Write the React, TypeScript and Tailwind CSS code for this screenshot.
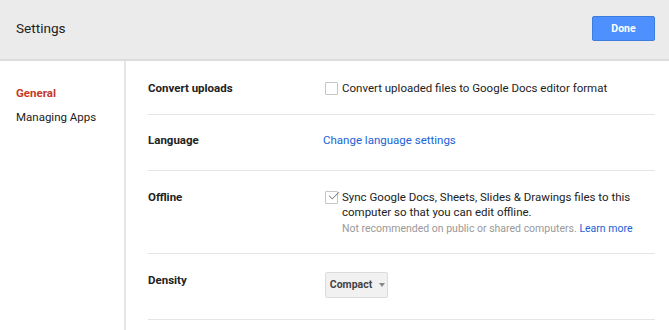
import { Check } from 'lucide-react';

const rows = [
  { label: 'Convert uploads', kind: 'convert' },
  { label: 'Language', kind: 'language' },
  { label: 'Offline', kind: 'offline' },
  { label: 'Density', kind: 'density' },
];

function Box({ checked }: { checked?: boolean }) {
  return (
    <span className="relative mt-[1px] flex h-[13px] w-[13px] shrink-0 items-center justify-center rounded-[1px] border border-[#c6c6c6] bg-white">
      {checked && (
        <Check className="absolute left-[1px] top-[-3px] h-[14px] w-[14px] text-[#555]" strokeWidth={1.5} />
      )}
    </span>
  );
}

export default function App() {
  return (
    <div className="h-[330px] w-[669px] overflow-hidden bg-white font-['Roboto','Liberation_Sans',sans-serif] text-[#222]">
      {/* Header */}
      <div className="flex h-[61px] items-center justify-between border-b-2 border-[#dcdcdc] bg-[#ebebeb] pl-4 pr-[14px]">
        <h1 className="mb-[2px] text-[13.6px] text-[#222]">Settings</h1>
        <button className="mb-[2px] h-[25px] w-[63px] rounded-[2px] border border-[#3c7de0] bg-[#4d90fe] text-[10.5px] font-bold text-white">
          Done
        </button>
      </div>

      <div className="flex h-[269px]">
        {/* Sidebar */}
        <div className="w-[126px] shrink-0 border-r-2 border-[#e6e6e6] pl-4 pt-[25px]">
          <div className="text-[11.5px] font-bold leading-[15px] text-[#c53929]">General</div>
          <div className="mt-[9px] text-[11.5px] leading-[15px] text-[#222]">Managing Apps</div>
        </div>

        {/* Content */}
        <div className="flex-1 pl-[22px] pr-[14px]">
          {rows.map((row) => (
            <div
              key={row.kind}
              className={`flex border-b border-[#e5e5e5] ${
                row.kind === 'convert'
                  ? 'h-[54px] items-center pt-[2px]'
                  : row.kind === 'language'
                    ? 'h-[56px] items-center pb-[4px]'
                    : row.kind === 'offline'
                      ? 'h-[83px] pt-[19px]'
                      : 'h-[66px] pt-[18px]'
              }`}
            >
              <div
                className={`w-[175px] shrink-0 text-[11.5px] font-bold leading-[15px] ${
                  row.kind === 'density' ? 'pt-[1px]' : ''
                }`}
              >
                {row.label}
              </div>
              {row.kind === 'convert' && (
                <div className="flex items-start gap-[4px] pl-[2px] text-[11.5px] leading-[15px]">
                  <Box />
                  <span>Convert uploaded files to Google Docs editor format</span>
                </div>
              )}
              {row.kind === 'language' && (
                <a className="text-[11.5px] leading-[15px] text-[#1a62d6]">Change language settings</a>
              )}
              {row.kind === 'offline' && (
                <div className="flex items-start gap-[4px] pl-[2px]">
                  <Box checked />
                  <div>
                    <div className="text-[11.5px] leading-[15px]">
                      Sync Google Docs, Sheets, Slides &amp; Drawings files to this
                      <br />
                      computer so that you can edit offline.
                    </div>
                    <div className="mt-[1px] text-[10.5px] leading-[15px] text-[#999]">
                      Not recommended on public or shared computers.{' '}
                      <a className="text-[#1a62d6]">Learn more</a>
                    </div>
                  </div>
                </div>
              )}
              {row.kind === 'density' && (
                <div className="ml-[2px] flex h-[26px] w-[63px] items-center justify-center gap-[7px] rounded-[2px] border border-[#dcdcdc] bg-[#f1f1f1] pl-[2px] text-[10.5px] font-bold text-[#444]">
                  Compact
                  <span className="h-0 w-0 border-x-[3.5px] border-t-[4px] border-x-transparent border-t-[#888]" />
                </div>
              )}
            </div>
          ))}
        </div>
      </div>
    </div>
  );
}
